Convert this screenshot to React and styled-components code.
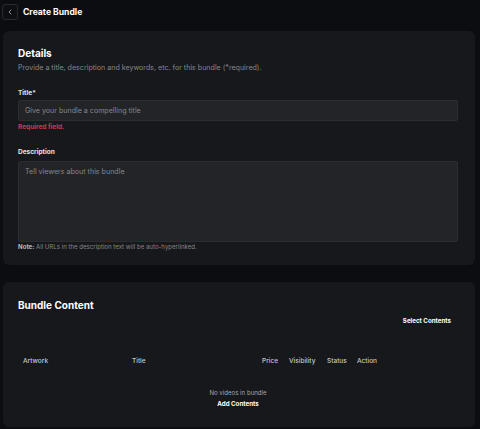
import React from "react";
import styled, { createGlobalStyle } from "styled-components";

const Global = createGlobalStyle`
  html, body {
    margin: 0;
    padding: 0;
    background: #0c0d10;
  }
  body {
    font-family: Inter, "Liberation Sans", Arial, sans-serif;
    color: #f2f2f4;
  }
`;

const Page = styled.div`
  width: 480px;
  min-height: 429px;
  padding: 4px 5px 0 3px;
  box-sizing: border-box;
  display: flex;
  flex-direction: column;
`;

const Header = styled.header`
  display: flex;
  align-items: center;
  gap: 5px;
  height: 16px;
  margin-left: -1px;
`;

const BackButton = styled.button`
  width: 16px;
  height: 16px;
  flex: none;
  box-sizing: border-box;
  padding: 0;
  border: 1px solid #2a2b2f;
  border-radius: 3px;
  background: #0e0f12;
  color: #d8d8dc;
  display: flex;
  align-items: center;
  justify-content: center;
  cursor: pointer;
`;

const PageTitle = styled.h1`
  margin: 0;
  font-size: 8.6px;
  font-weight: 700;
  color: #ffffff;
`;

const Card = styled.section`
  background: #17181c;
  border-radius: 6px;
  padding: ${({ $pad }) => $pad};
  margin-top: ${({ $top }) => $top}px;
  height: ${({ $h }) => $h}px;
  box-sizing: border-box;
  display: flex;
  flex-direction: column;
`;

const CardTitle = styled.h2`
  margin: 0;
  font-size: 10px;
  line-height: 14px;
  font-weight: 700;
  color: #ffffff;
`;

const Subtitle = styled.p`
  margin: 3px 0 0;
  font-size: 7.1px;
  line-height: 10px;
  color: #86878c;
`;

const Label = styled.label`
  display: block;
  margin-top: ${({ $top }) => $top}px;
  font-size: 6.5px;
  line-height: 9px;
  font-weight: 700;
  color: #e4e4e8;
`;

const Input = styled.input`
  display: block;
  width: 100%;
  height: 21px;
  margin-top: 2px;
  box-sizing: border-box;
  background: #232428;
  border: 1px solid #2c2d31;
  border-radius: 2px;
  padding: 0 6px;
  font-family: inherit;
  font-size: 7.1px;
  color: #e0e0e4;
  outline: none;
  &::placeholder {
    color: #85868b;
  }
`;

const TextArea = styled.textarea`
  display: block;
  width: 100%;
  height: 81px;
  margin-top: 4px;
  box-sizing: border-box;
  background: #232428;
  border: 1px solid #2c2d31;
  border-radius: 2px;
  padding: 5px 6px;
  font-family: inherit;
  font-size: 7.1px;
  line-height: 10px;
  color: #e0e0e4;
  resize: none;
  outline: none;
  &::placeholder {
    color: #85868b;
  }
`;

const ErrorText = styled.p`
  margin: 2px 0 0;
  font-size: 6.5px;
  line-height: 9px;
  font-weight: 700;
  color: #c93c47;
`;

const Note = styled.p`
  margin: 0;
  font-size: 6.1px;
  line-height: 9px;
  color: #85868b;
  & b {
    color: #b8b9be;
  }
`;

const ActionRow = styled.div`
  display: flex;
  justify-content: flex-end;
  margin-top: 4px;
  padding-right: 7px;
`;

const LinkButton = styled.button`
  background: none;
  border: none;
  padding: 0;
  font-family: inherit;
  font-size: 6.2px;
  line-height: 10px;
  font-weight: 700;
  color: #ffffff;
  cursor: pointer;
`;

const TableHead = styled.div`
  display: grid;
  grid-template-columns: 109px 130px 27px 38px 30px 40px;
  margin-top: 30px;
  padding-left: 5px;
`;

const HeadCell = styled.span`
  font-size: 6.5px;
  line-height: 10px;
  font-weight: 500;
  color: #c6c7cc;
`;

const Empty = styled.div`
  display: flex;
  flex-direction: column;
  align-items: center;
  margin-top: 22px;
  gap: 2px;
`;

const EmptyText = styled.span`
  font-size: 6.1px;
  line-height: 9px;
  color: #a6a7ac;
`;

const columns = ["Artwork", "Title", "Price", "Visibility", "Status", "Action"];

export default function App() {
  return (
    <>
      <Global />
      <Page>
        <Header>
          <BackButton aria-label="Back">
            <svg width="8" height="8" viewBox="0 0 24 24" fill="none" stroke="currentColor" strokeWidth="2" strokeLinecap="round" strokeLinejoin="round">
              <path d="M15 18l-6-6 6-6" />
            </svg>
          </BackButton>
          <PageTitle>Create Bundle</PageTitle>
        </Header>

        <Card $top={11} $h={234} $pad="15px 17px 0 15px">
          <CardTitle>Details</CardTitle>
          <Subtitle>Provide a title, description and keywords, etc. for this bundle (*required).</Subtitle>

          <Label $top={16}>Title*</Label>
          <Input placeholder="Give your bundle a compelling title" />
          <ErrorText>Required field.</ErrorText>

          <Label $top={16}>Description</Label>
          <TextArea placeholder="Tell viewers about this bundle" />
          <Note>
            <b>Note:</b> All URLs in the description text will be auto-hyperlinked.
          </Note>
        </Card>

        <Card $top={17} $h={145} $pad="16px 17px 0 15px">
          <CardTitle>Bundle Content</CardTitle>
          <ActionRow>
            <LinkButton>Select Contents</LinkButton>
          </ActionRow>
          <TableHead>
            {columns.map((c) => (
              <HeadCell key={c}>{c}</HeadCell>
            ))}
          </TableHead>
          <Empty>
            <EmptyText>No videos in bundle</EmptyText>
            <LinkButton>Add Contents</LinkButton>
          </Empty>
        </Card>
      </Page>
    </>
  );
}
